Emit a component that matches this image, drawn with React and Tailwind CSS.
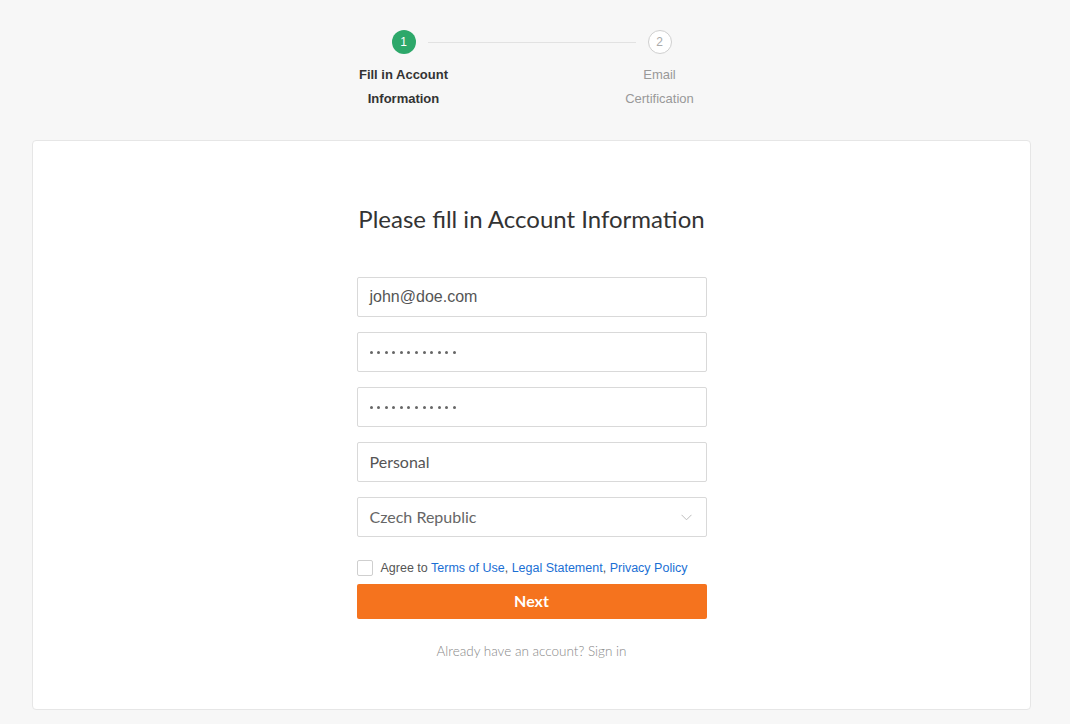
export default function App() {
  const dots = Array.from({ length: 12 });
  const Dots = () => (
    <div className="flex items-center gap-[4.6px]">
      {dots.map((_, i) => (
        <span key={i} className="block w-[3px] h-[3px] rounded-full bg-[#666]" />
      ))}
    </div>
  );
  return (
    <div className="min-h-[724px] bg-[#f7f7f7] pr-[7px] pt-[30px] pb-[14px]">
      {/* Stepper */}
      <div className="flex flex-col items-center">
        <div className="flex items-center">
          <div className="w-6 h-6 rounded-full bg-[#2da86a] text-white text-[12px] flex items-center justify-center font-['Liberation_Sans',sans-serif]">
            1
          </div>
          <div className="w-[208px] h-px bg-[#e2e2e2] mx-3" />
          <div className="w-6 h-6 rounded-full border border-[#cfcfcf] text-[#aaa] text-[12px] flex items-center justify-center font-['Liberation_Sans',sans-serif] bg-white">
            2
          </div>
        </div>
        <div className="flex gap-[136px] mt-2 pt-px font-['Liberation_Sans',sans-serif] text-[13px] leading-6">
          <div className="w-[120px] text-center font-bold text-[#333]">
            Fill in Account
            <br />
            Information
          </div>
          <div className="w-[120px] text-center text-[#999]">
            Email
            <br />
            Certification
          </div>
        </div>
      </div>

      {/* Card */}
      <div className="mx-8 mt-[29px] h-[570px] bg-white border border-[#e6e6e6] rounded-[4px] pt-[62px] flex flex-col items-center">
        <h1 className="font-['Lato',sans-serif] text-[24px] leading-8 text-[#333]">
          Please fill in Account Information
        </h1>
        <div className="w-[350px] mt-[42px] flex flex-col gap-[15px]">
          <div className="h-10 border border-[#d9d9d9] rounded-[2px] flex items-center px-3 font-['Liberation_Sans',sans-serif] text-[16px] text-[#555]">
            john@doe.com
          </div>
          <div className="h-10 border border-[#d9d9d9] rounded-[2px] flex items-center px-3">
            <Dots />
          </div>
          <div className="h-10 border border-[#d9d9d9] rounded-[2px] flex items-center px-3">
            <Dots />
          </div>
          <div className="h-10 border border-[#d9d9d9] rounded-[2px] flex items-center px-3 font-['Lato',sans-serif] text-[16px] text-[#555]">
            Personal
          </div>
          <div className="h-10 border border-[#d9d9d9] rounded-[2px] flex items-center justify-between px-3 font-['Lato',sans-serif] text-[16px] text-[#666]">
            <span>Czech Republic</span>
            <svg width="11" height="7" viewBox="0 0 11 7" fill="none" className="mr-[2px]">
              <path d="M0.5 0.8 L5.5 5.8 L10.5 0.8" stroke="#bdbdbd" strokeWidth="1" />
            </svg>
          </div>
        </div>
        <div className="w-[350px] mt-[22px] flex items-center gap-2 font-['Liberation_Sans',sans-serif] text-[12.5px] text-[#555]">
          <span className="block w-4 h-4 border border-[#cfcfcf] rounded-[2px] bg-white" />
          <span>
            Agree to{" "}
            <span className="text-[#1a6fd4]">Terms of Use</span>,{" "}
            <span className="text-[#1a6fd4]">Legal Statement</span>,{" "}
            <span className="text-[#1a6fd4]">Privacy Policy</span>
          </span>
        </div>
        <button className="w-[350px] h-[35px] mt-[6px] bg-[#f5731e] rounded-[2px] text-white font-['Lato',sans-serif] font-bold text-[16px]">
          Next
        </button>
        <div className="mt-[22px] font-['Lato',sans-serif] font-light text-[13.5px] text-[#888]">
          Already have an account? Sign in
        </div>
      </div>
    </div>
  );
}
